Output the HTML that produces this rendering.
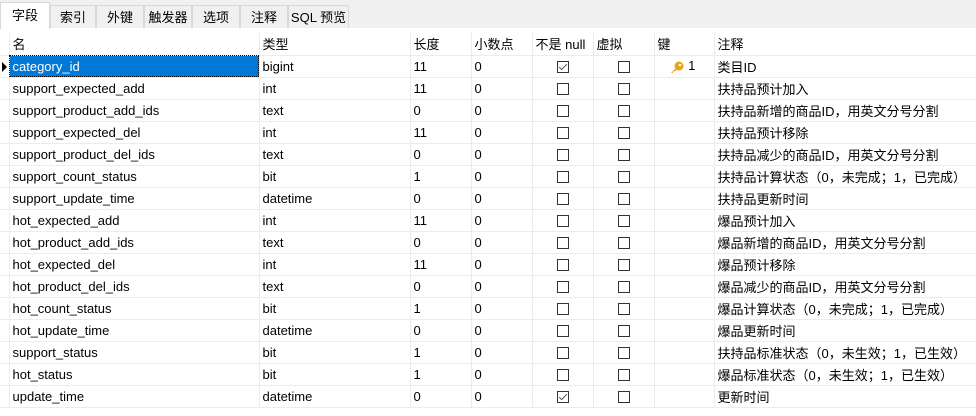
<!DOCTYPE html>
<html><head><meta charset="utf-8"><style>
body{margin:0;width:976px;height:416px;background:#fff;overflow:hidden;font-family:"Liberation Sans","Noto Sans CJK SC",sans-serif;font-size:13px;color:#000;position:relative}
.bar{position:absolute;left:0;top:0;width:976px;height:28px;background:#f0f0f0}
.tab{position:absolute;top:5px;height:23px;line-height:23px;background:#f0f0f0;border:1px solid #d9d9d9;border-bottom:none;box-sizing:border-box;text-align:center;font-size:13px}
.tab.a{top:2px;height:27px;background:#fff;border-color:#d9d9d9;line-height:26px}
table{position:absolute;left:0;top:33px;border-collapse:collapse;table-layout:fixed;width:976px}
td{height:22px;border-right:1px solid #ececec;border-bottom:1px solid #ececec;padding:0 0 0 3px;white-space:nowrap;overflow:hidden;box-sizing:border-box}
tr.h td{height:22px}
td.i{padding:0}
td.c{text-align:center;padding:0}
.cb{display:inline-block;width:12px;height:12px;border:1px solid #333;vertical-align:middle;box-sizing:border-box;position:relative}
.ck::after{content:"";position:absolute;left:3px;top:0px;width:3px;height:7px;border:solid #555;border-width:0 1px 1px 0;transform:rotate(45deg)}
.sel{background:#0078d7;color:#fff;outline:1px dotted #000;outline-offset:-1px}
.arr{display:inline-block;width:0;height:0;border-left:5px solid #000;border-top:5px solid transparent;border-bottom:5px solid transparent;margin-left:2px;vertical-align:middle}
</style></head><body>
<div class="bar"></div>
<div class="tab a" style="left:0;width:50px">字段</div>
<div class="tab" style="left:50px;width:46px">索引</div>
<div class="tab" style="left:96px;width:48px">外键</div>
<div class="tab" style="left:144px;width:48px">触发器</div>
<div class="tab" style="left:192px;width:48px">选项</div>
<div class="tab" style="left:240px;width:48px">注释</div>
<div class="tab" style="left:288px;width:61px">SQL 预览</div>
<table>
<colgroup><col style="width:9px"><col style="width:250px"><col style="width:151px"><col style="width:61px"><col style="width:61px"><col style="width:61px"><col style="width:61px"><col style="width:60px"><col style="width:262px"></colgroup>
<tr class="h"><td class="i"></td><td>名</td><td>类型</td><td>长度</td><td>小数点</td><td>不是 null</td><td>虚拟</td><td>键</td><td>注释</td></tr>
<tr><td class="i"><span class="arr"></span></td><td class="sel">category_id</td><td>bigint</td><td>11</td><td>0</td><td class="c"><span class="cb ck"></span></td><td class="c"><span class="cb"></span></td><td style="padding-left:14px"><svg width="16" height="14" viewBox="0 0 16 14" style="vertical-align:middle"><circle cx="10" cy="6" r="4.5" fill="#e8a317"/><circle cx="11" cy="5" r="1.3" fill="#fff"/><path d="M7 8 L2 13 L4 13 L4 11.5 L5.5 11.5 L8.5 9Z" fill="#e8a317"/></svg> 1</td><td>类目ID</td></tr>
<tr><td class="i"></td><td>support_expected_add</td><td>int</td><td>11</td><td>0</td><td class="c"><span class="cb"></span></td><td class="c"><span class="cb"></span></td><td></td><td>扶持品预计加入</td></tr>
<tr><td class="i"></td><td>support_product_add_ids</td><td>text</td><td>0</td><td>0</td><td class="c"><span class="cb"></span></td><td class="c"><span class="cb"></span></td><td></td><td>扶持品新增的商品ID，用英文分号分割</td></tr>
<tr><td class="i"></td><td>support_expected_del</td><td>int</td><td>11</td><td>0</td><td class="c"><span class="cb"></span></td><td class="c"><span class="cb"></span></td><td></td><td>扶持品预计移除</td></tr>
<tr><td class="i"></td><td>support_product_del_ids</td><td>text</td><td>0</td><td>0</td><td class="c"><span class="cb"></span></td><td class="c"><span class="cb"></span></td><td></td><td>扶持品减少的商品ID，用英文分号分割</td></tr>
<tr><td class="i"></td><td>support_count_status</td><td>bit</td><td>1</td><td>0</td><td class="c"><span class="cb"></span></td><td class="c"><span class="cb"></span></td><td></td><td>扶持品计算状态（0，未完成；1，已完成）</td></tr>
<tr><td class="i"></td><td>support_update_time</td><td>datetime</td><td>0</td><td>0</td><td class="c"><span class="cb"></span></td><td class="c"><span class="cb"></span></td><td></td><td>扶持品更新时间</td></tr>
<tr><td class="i"></td><td>hot_expected_add</td><td>int</td><td>11</td><td>0</td><td class="c"><span class="cb"></span></td><td class="c"><span class="cb"></span></td><td></td><td>爆品预计加入</td></tr>
<tr><td class="i"></td><td>hot_product_add_ids</td><td>text</td><td>0</td><td>0</td><td class="c"><span class="cb"></span></td><td class="c"><span class="cb"></span></td><td></td><td>爆品新增的商品ID，用英文分号分割</td></tr>
<tr><td class="i"></td><td>hot_expected_del</td><td>int</td><td>11</td><td>0</td><td class="c"><span class="cb"></span></td><td class="c"><span class="cb"></span></td><td></td><td>爆品预计移除</td></tr>
<tr><td class="i"></td><td>hot_product_del_ids</td><td>text</td><td>0</td><td>0</td><td class="c"><span class="cb"></span></td><td class="c"><span class="cb"></span></td><td></td><td>爆品减少的商品ID，用英文分号分割</td></tr>
<tr><td class="i"></td><td>hot_count_status</td><td>bit</td><td>1</td><td>0</td><td class="c"><span class="cb"></span></td><td class="c"><span class="cb"></span></td><td></td><td>爆品计算状态（0，未完成；1，已完成）</td></tr>
<tr><td class="i"></td><td>hot_update_time</td><td>datetime</td><td>0</td><td>0</td><td class="c"><span class="cb"></span></td><td class="c"><span class="cb"></span></td><td></td><td>爆品更新时间</td></tr>
<tr><td class="i"></td><td>support_status</td><td>bit</td><td>1</td><td>0</td><td class="c"><span class="cb"></span></td><td class="c"><span class="cb"></span></td><td></td><td>扶持品标准状态（0，未生效；1，已生效）</td></tr>
<tr><td class="i"></td><td>hot_status</td><td>bit</td><td>1</td><td>0</td><td class="c"><span class="cb"></span></td><td class="c"><span class="cb"></span></td><td></td><td>爆品标准状态（0，未生效；1，已生效）</td></tr>
<tr><td class="i"></td><td>update_time</td><td>datetime</td><td>0</td><td>0</td><td class="c"><span class="cb ck"></span></td><td class="c"><span class="cb"></span></td><td></td><td>更新时间</td></tr>
</table>
</body></html>
